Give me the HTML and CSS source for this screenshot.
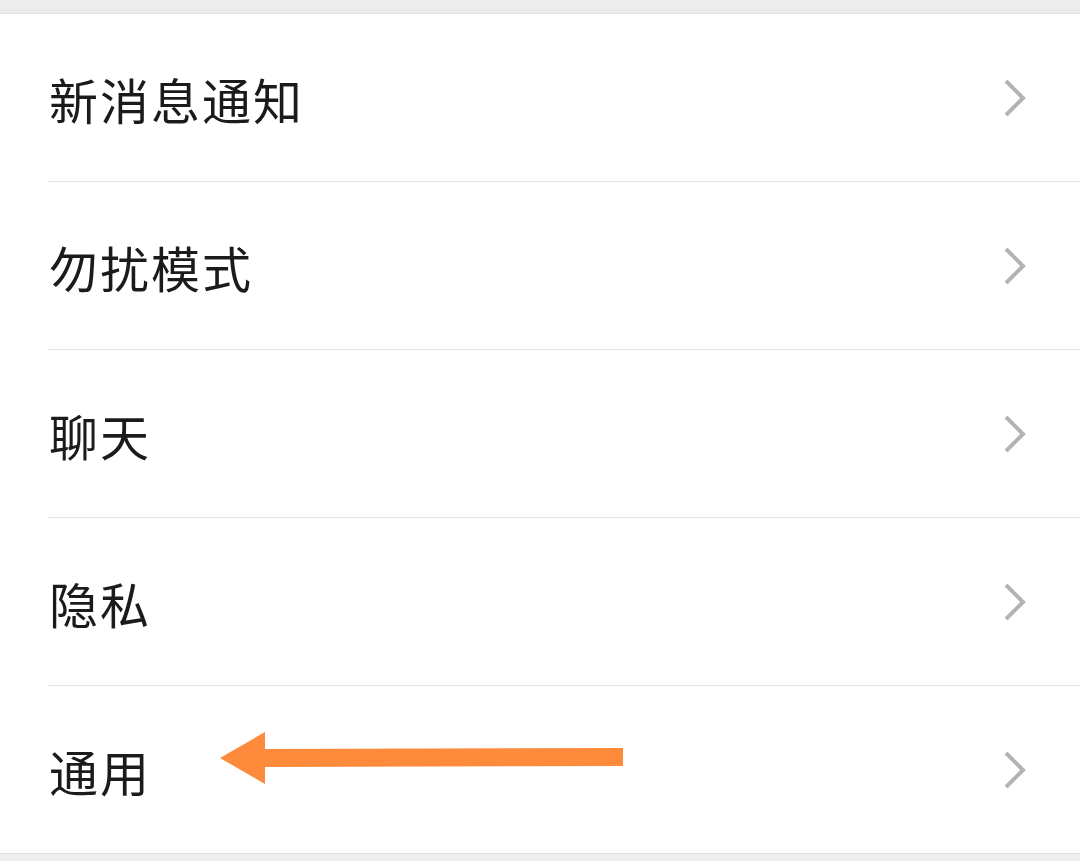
FILE: index.html
```html
<!DOCTYPE html>
<html lang="zh">
<head>
<meta charset="utf-8">
<link rel="stylesheet" href="styles.css">
</head>
<body>
<div class="page">
  <div class="topbar"></div>
  <ul class="list">
    <li class="row"><span class="label">新消息通知</span><svg class="chev" viewBox="0 0 24 40" width="24" height="40"><path d="M3 3 L20 20 L3 37" fill="none" stroke="#b3b3b3" stroke-width="4"/></svg></li>
    <li class="row"><span class="label">勿扰模式</span><svg class="chev" viewBox="0 0 24 40" width="24" height="40"><path d="M3 3 L20 20 L3 37" fill="none" stroke="#b3b3b3" stroke-width="4"/></svg></li>
    <li class="row"><span class="label">聊天</span><svg class="chev" viewBox="0 0 24 40" width="24" height="40"><path d="M3 3 L20 20 L3 37" fill="none" stroke="#b3b3b3" stroke-width="4"/></svg></li>
    <li class="row"><span class="label">隐私</span><svg class="chev" viewBox="0 0 24 40" width="24" height="40"><path d="M3 3 L20 20 L3 37" fill="none" stroke="#b3b3b3" stroke-width="4"/></svg></li>
    <li class="row last"><span class="label">通用</span><svg class="arrow" viewBox="0 0 404 52" width="404" height="52"><polygon points="0,26 45,0 45,17 403,16 403,34 45,35 45,52" fill="#fd8b3b"/></svg><svg class="chev" viewBox="0 0 24 40" width="24" height="40"><path d="M3 3 L20 20 L3 37" fill="none" stroke="#b3b3b3" stroke-width="4"/></svg></li>
  </ul>
  <div class="bottombar"></div>
</div>
</body>
</html>
```
FILE: styles.css
```css
html, body {
  margin: 0;
  padding: 0;
  background: #ededed;
}
.page {
  width: 1080px;
  height: 861px;
  display: flex;
  flex-direction: column;
  background: #ffffff;
  font-family: "Noto Sans CJK SC", "Noto Sans", sans-serif;
}
.topbar {
  height: 13px;
  background: #ececec;
  border-bottom: 1px solid #e2e2e2;
}
.list {
  list-style: none;
  margin: 0;
  padding: 0 0 0 48px;
  background: #ffffff;
}
.row {
  position: relative;
  height: 167px;
  display: flex;
  align-items: center;
  border-bottom: 1px solid #e3e3e3;
  padding-right: 53px;
}
.row.last {
  border-bottom: none;
}
.label {
  flex: 1;
  font-size: 49px;
  color: #1b1b1b;
  letter-spacing: 2px;
  line-height: 1;
  padding-left: 1px;
  margin-top: 1px;
}
.chev {
  display: block;
}
.arrow {
  position: absolute;
  left: 172px;
  top: 46px;
}
.bottombar {
  flex: 1;
  background: #ededed;
  border-top: 1px solid #e2e2e2;
}
```
